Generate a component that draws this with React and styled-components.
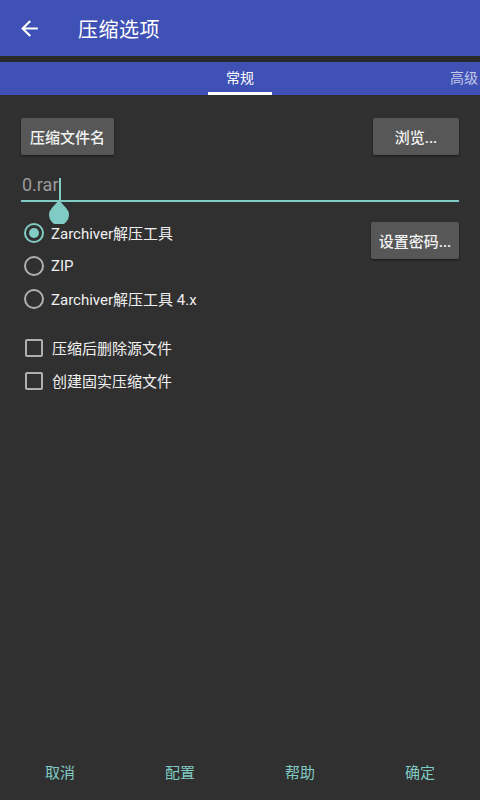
import React from "react";
import styled, { createGlobalStyle } from "styled-components";

const Global = createGlobalStyle`
  html, body { margin: 0; padding: 0; background: #303030; }
  body { font-family: Roboto, "Noto Sans CJK SC", sans-serif; }
  * { box-sizing: border-box; }
`;

const Page = styled.div`
  width: 480px;
  height: 800px;
  display: flex;
  flex-direction: column;
  background: #303030;
  overflow: hidden;
`;

const AppBar = styled.div`
  height: 56px;
  background: #3f51b5;
  display: flex;
  align-items: center;
  padding-left: 17px;
  gap: 36px;
  color: #fff;
`;

const Title = styled.div`
  font-size: 20px;
  font-family: Roboto, "Noto Sans CJK SC", sans-serif;
  letter-spacing: 0.5px;
`;

const Stripe = styled.div`
  height: 6px;
  background: #2a2a2a;
`;

const TabBar = styled.div`
  height: 33px;
  background: #3f51b5;
  display: flex;
  padding-left: 128px;
  overflow: hidden;
`;

const Tab = styled.div`
  flex: 0 0 224px;
  display: flex;
  flex-direction: column;
  align-items: center;
  justify-content: space-between;
  font-size: 14px;
  padding-top: 5px;
  color: ${(p) => (p.$active ? "#ffffff" : "#c5cae9")};
`;

const Indicator = styled.div`
  width: 64px;
  height: 3px;
  background: ${(p) => (p.$active ? "#ffffff" : "transparent")};
`;

const Content = styled.div`
  padding: 23px 21px 0 21px;
  display: flex;
  flex-direction: column;
`;

const Row = styled.div`
  display: flex;
  justify-content: space-between;
  align-items: flex-start;
`;

const Button = styled.button`
  height: 37px;
  padding: 0 ${(p) => p.$pad || 0}px;
  width: ${(p) => (p.$w ? `${p.$w}px` : "auto")};
  background: #575757;
  color: #f2f2f2;
  border: none;
  border-radius: 2px;
  font-size: 15px;
  font-weight: 500;
  font-family: Roboto, "Noto Sans CJK SC", sans-serif;
  box-shadow: 0 1px 2px rgba(0, 0, 0, 0.5);
  margin-top: ${(p) => p.$mt || 0}px;
  white-space: nowrap;
`;

const InputWrap = styled.div`
  position: relative;
  margin-top: 18px;
  height: 29px;
  border-bottom: 2px solid #80cbc4;
  display: flex;
  align-items: flex-end;
  padding-bottom: 4px;
  padding-left: 1px;
`;

const InputText = styled.span`
  font-size: 18px;
  color: #9a9a9a;
  font-family: Roboto, sans-serif;
  line-height: 22px;
`;

const Cursor = styled.span`
  display: inline-block;
  width: 2px;
  height: 22px;
  background: #80cbc4;
  position: relative;
  top: 4px;
`;

const Handle = styled.svg`
  position: absolute;
  left: 27px;
  top: 27px;
`;

const OptionsRow = styled.div`
  display: flex;
  justify-content: space-between;
  align-items: flex-start;
  margin-top: 14px;
`;

const Group = styled.div`
  display: flex;
  flex-direction: column;
`;

const Option = styled.label`
  height: 33px;
  display: flex;
  align-items: center;
  gap: 7px;
  color: #f0f0f0;
  font-size: 15px;
  font-family: Roboto, "Noto Sans CJK SC", sans-serif;
`;

const Radio = styled.span`
  width: 20px;
  height: 20px;
  margin-left: 3px;
  border-radius: 50%;
  border: 2px solid ${(p) => (p.$checked ? "#80cbc4" : "#b0b0b0")};
  display: flex;
  align-items: center;
  justify-content: center;
  &::after {
    content: "";
    width: 10px;
    height: 10px;
    border-radius: 50%;
    background: ${(p) => (p.$checked ? "#80cbc4" : "transparent")};
  }
`;

const Check = styled.span`
  width: 18px;
  height: 18px;
  margin: 0 2px 0 4px;
  border: 2px solid #b0b0b0;
  border-radius: 2px;
`;

const CheckGroup = styled(Group)`
  margin-top: 16px;
`;

const BottomBar = styled.div`
  margin-top: auto;
  height: 56px;
  display: grid;
  grid-template-columns: repeat(4, 1fr);
  align-items: center;
  padding-bottom: 1px;
`;

const BottomButton = styled.div`
  text-align: center;
  color: #80cbc4;
  font-size: 15px;
  font-family: Roboto, "Noto Sans CJK SC", sans-serif;
`;

export default function App() {
  return (
    <Page>
      <Global />
      <AppBar>
        <svg width="25" height="25" viewBox="0 0 24 24">
          <path d="M20 11H7.83l5.59-5.59L12 4l-8 8 8 8 1.41-1.41L7.83 13H20v-2z" fill="#fff" />
        </svg>
        <Title>压缩选项</Title>
      </AppBar>
      <Stripe />
      <TabBar>
        <Tab $active>
          <span>常规</span>
          <Indicator $active />
        </Tab>
        <Tab>
          <span>高级</span>
          <Indicator />
        </Tab>
      </TabBar>
      <Content>
        <Row>
          <Button $pad={9}>压缩文件名</Button>
          <Button $w={86}>浏览...</Button>
        </Row>
        <InputWrap>
          <InputText>0.rar</InputText>
          <Cursor />
          <Handle width="22" height="24" viewBox="0 0 22 24">
            <path d="M11 0 L3.5 8.5 A10 10 0 1 0 18.5 8.5 Z" fill="#80cbc4" />
          </Handle>
        </InputWrap>
        <OptionsRow>
          <Group>
            <Option><Radio $checked />Zarchiver解压工具</Option>
            <Option><Radio />ZIP</Option>
            <Option><Radio />Zarchiver解压工具 4.x</Option>
          </Group>
          <Button $mt={6} $w={88}>设置密码...</Button>
        </OptionsRow>
        <CheckGroup>
          <Option><Check />压缩后删除源文件</Option>
          <Option><Check />创建固实压缩文件</Option>
        </CheckGroup>
      </Content>
      <BottomBar>
        <BottomButton>取消</BottomButton>
        <BottomButton>配置</BottomButton>
        <BottomButton>帮助</BottomButton>
        <BottomButton>确定</BottomButton>
      </BottomBar>
    </Page>
  );
}
